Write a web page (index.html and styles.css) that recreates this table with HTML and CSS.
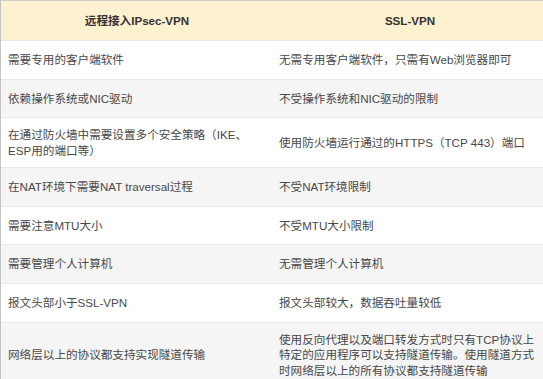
FILE: index.html
```html
<!DOCTYPE html>
<html lang="zh-CN">
<head>
<meta charset="utf-8">
<title>IPsec-VPN vs SSL-VPN</title>
<link rel="stylesheet" href="styles.css">
</head>
<body>
<div class="table">
  <div class="row head">
    <div class="cell">远程接入IPsec-VPN</div>
    <div class="cell">SSL-VPN</div>
  </div>
  <div class="row">
    <div class="cell">需要专用的客户端软件</div>
    <div class="cell">无需专用客户端软件，只需有Web浏览器即可</div>
  </div>
  <div class="row alt">
    <div class="cell">依赖操作系统或NIC驱动</div>
    <div class="cell">不受操作系统和NIC驱动的限制</div>
  </div>
  <div class="row">
    <div class="cell">在通过防火墙中需要设置多个安全策略（IKE、ESP用的端口等）</div>
    <div class="cell">使用防火墙运行通过的HTTPS（TCP 443）端口</div>
  </div>
  <div class="row alt">
    <div class="cell">在NAT环境下需要NAT traversal过程</div>
    <div class="cell">不受NAT环境限制</div>
  </div>
  <div class="row">
    <div class="cell">需要注意MTU大小</div>
    <div class="cell">不受MTU大小限制</div>
  </div>
  <div class="row alt">
    <div class="cell">需要管理个人计算机</div>
    <div class="cell">无需管理个人计算机</div>
  </div>
  <div class="row">
    <div class="cell">报文头部小于SSL-VPN</div>
    <div class="cell">报文头部较大，数据吞吐量较低</div>
  </div>
  <div class="row alt">
    <div class="cell">网络层以上的协议都支持实现隧道传输</div>
    <div class="cell">使用反向代理以及端口转发方式时只有TCP协议上特定的应用程序可以支持隧道传输。使用隧道方式时网络层以上的所有协议都支持隧道传输</div>
  </div>
</div>
</body>
</html>
```

FILE: styles.css
```css
html, body {
  margin: 0;
  padding: 0;
  overflow: hidden;
  background: #ffffff;
}

.table {
  width: 546px;
  border-top: 1px solid #cfcfcf;
  border-left: 1px solid #c4c4c4;
  box-sizing: border-box;
  font-family: "Liberation Sans", "Noto Sans CJK SC", sans-serif;
  font-size: 11.6px;
  color: #484848;
}

.row {
  display: grid;
  grid-template-columns: 270px 1fr;
  min-height: 38.6px;
  box-sizing: border-box;
  border-top: 1px solid #e9e9e9;
  background: #ffffff;
}

.row.alt {
  background: #f5f5f5;
}

.row.head {
  border-top: none;
  min-height: 39px;
  background: #fef1d0;
  font-weight: bold;
  color: #333333;
}

.cell {
  display: flex;
  align-items: center;
  padding: 9px 5px 9px 7px;
  line-height: 15.5px;
}

.cell + .cell {
  padding-left: 8px;
}

.head .cell {
  justify-content: center;
}
```
